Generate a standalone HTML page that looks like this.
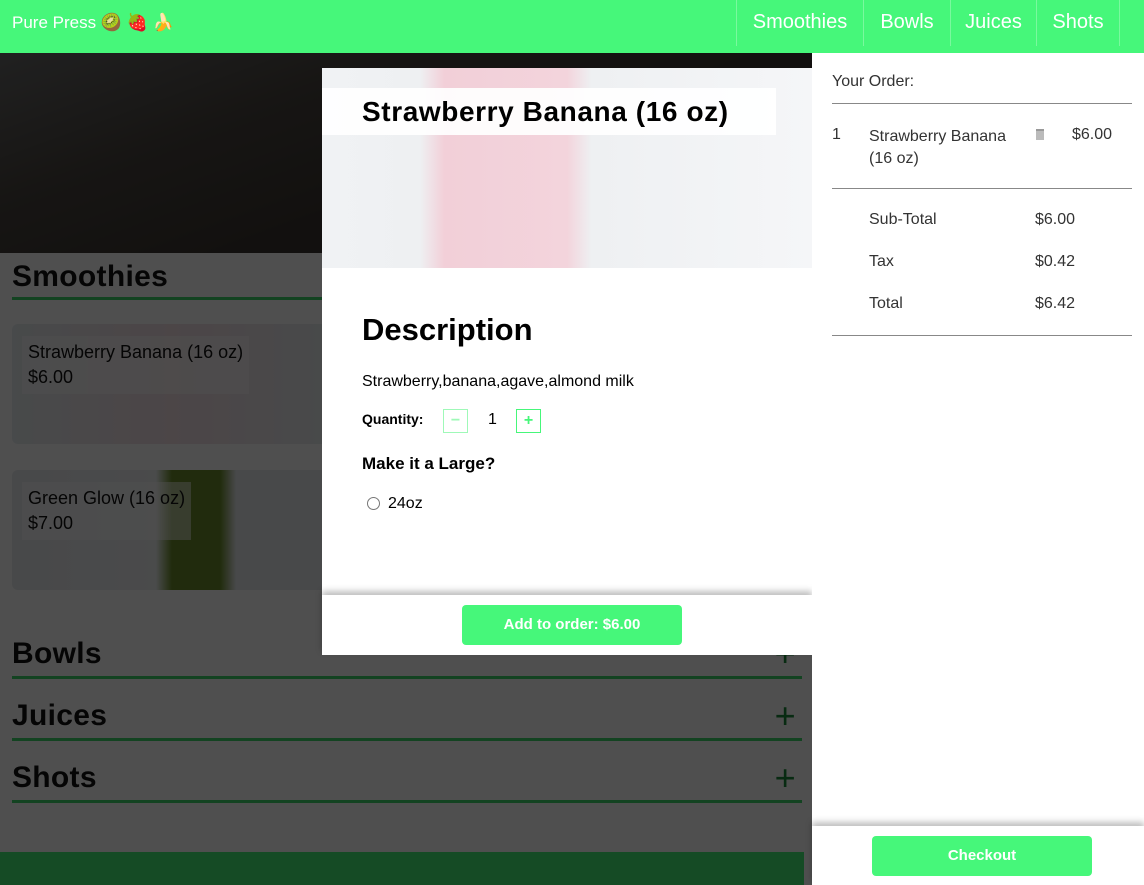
<!DOCTYPE html>
<html><head><meta charset="utf-8"><style>
*{box-sizing:border-box;margin:0;padding:0}
html,body{width:1144px;height:885px;overflow:hidden}
body{position:relative;font-family:"Liberation Sans",sans-serif;background:#fff}
.hdr{position:absolute;left:0;top:0;width:1144px;height:53px;background:#46f77a;color:#fff}
.brand{position:absolute;left:12px;top:13px;font-size:17px}
.nav{position:absolute;left:736px;top:0;height:46px;display:flex;border-left:1px solid #7af99e}
.nav div{height:46px;line-height:44px;font-size:20px;text-align:center;border-right:1px solid #7af99e}
.left{position:absolute;left:0;top:53px;width:812px;height:832px;background:#fff}
.hero{position:absolute;left:0;top:0;width:812px;height:200px;background:linear-gradient(160deg,#6a6a6a 0%,#4a4540 30%,#3a3430 60%,#4a4a4a 100%)}
.sec{position:absolute;left:12px;width:790px;border-bottom:3px solid #3ed86a;font-weight:bold;font-size:30px;color:#111;letter-spacing:.3px}
.card{position:absolute;left:12px;width:320px;height:120px;border-radius:6px;background:linear-gradient(90deg,#e8eef0,#f4e0e6 50%,#e8eef0)}
.card .lbl{position:absolute;left:10px;top:12px;background:rgba(255,255,255,.5);padding:4px 6px;font-size:18px;color:#111;line-height:25px}
.plus{position:absolute;right:6px;top:-4px;font-size:36px;color:#1c8a3a;font-weight:normal}
.foot{position:absolute;left:0;top:799px;width:804px;height:33px;background:#46f077}
.dim{position:absolute;left:0;top:53px;width:812px;height:832px;background:rgba(0,0,0,.69)}
.modal{position:absolute;left:322px;top:68px;width:490px;height:587px;background:#fff}
.mimg{position:absolute;left:0;top:0;width:490px;height:200px;background:linear-gradient(90deg,#f0f2f4 0%,#eef0f2 20%,#f2cfd8 25%,#f3d4dc 50%,#eef0f2 55%,#f5f6f8 100%)}
.mtitle{position:absolute;left:0;top:20px;width:454px;height:47px;background:rgba(255,255,255,.92);font-weight:bold;font-size:28px;padding:8px 0 0 40px;letter-spacing:.6px}
.mbot{position:absolute;left:0;top:527px;width:490px;height:60px;background:#fff;box-shadow:0 -4px 6px rgba(0,0,0,.25)}
.btn{position:absolute;background:#46f77a;color:#fff;border-radius:4px;font-weight:bold;text-align:center;font-size:15px}
.side{position:absolute;left:812px;top:53px;width:332px;height:832px;background:#fff}
.side .t{position:absolute;font-size:16px;color:#333}
.hr{position:absolute;left:20px;width:300px;border-top:1px solid #888}
.cbar{position:absolute;left:0;top:773px;width:332px;height:59px;background:#fff;box-shadow:0 -4px 6px rgba(0,0,0,.25)}
.qb{position:absolute;width:25px;height:24px;border:1px solid #46f77a;text-align:center;line-height:21px;color:#46f77a;font-weight:bold;font-size:16px}
</style></head><body>
<div class="hdr"><div class="brand">Pure Press 🥝 🍓 🍌</div>
<div class="nav"><div style="width:127px">Smoothies</div><div style="width:87px">Bowls</div><div style="width:86px">Juices</div><div style="width:83px">Shots</div></div></div>
<div class="left">
<div class="hero"></div>
<div class="sec" style="top:207px;height:40px;background:#fff">Smoothies</div>
<div class="card" style="top:271px"><div class="lbl">Strawberry Banana (16 oz)<br>$6.00</div></div>
<div class="card" style="top:417px;background:linear-gradient(90deg,#e8eaee,#eef0f2 45%,#6a8a2a 50%,#6a8a2a 65%,#e8eaee 70%)"><div class="lbl">Green Glow (16 oz)<br>$7.00</div></div>
<div class="sec" style="top:584px;height:42px">Bowls<span class="plus">+</span></div>
<div class="sec" style="top:646px;height:42px">Juices<span class="plus">+</span></div>
<div class="sec" style="top:708px;height:42px">Shots<span class="plus">+</span></div>
<div class="foot"></div>
</div>
<div class="dim"></div>
<div class="modal">
<div class="mimg"></div>
<div class="mtitle">Strawberry Banana (16 oz)</div>
<div style="position:absolute;left:40px;top:244px;font-size:31px;font-weight:bold">Description</div>
<div style="position:absolute;left:40px;top:305px;font-size:16px">Strawberry,banana,agave,almond milk</div>
<div style="position:absolute;left:40px;top:343px;font-size:14px;font-weight:bold">Quantity:</div>
<div class="qb" style="left:121px;top:341px;border-color:#9ff9b8;color:#9ff9b8">−</div>
<div style="position:absolute;left:166px;top:343px;font-size:16px">1</div>
<div class="qb" style="left:194px;top:341px">+</div>
<div style="position:absolute;left:40px;top:386px;font-size:17px;font-weight:bold">Make it a Large?</div>
<div style="position:absolute;left:45px;top:429px;width:13px;height:13px;border:1px solid #777;border-radius:50%"></div>
<div style="position:absolute;left:66px;top:427px;font-size:16px">24oz</div>
<div class="mbot"><div class="btn" style="left:140px;top:10px;width:220px;height:40px;line-height:40px">Add to order: $6.00</div></div>
</div>
<div class="side">
<div class="t" style="left:20px;top:20px">Your Order:</div>
<div class="hr" style="top:50px"></div>
<div class="t" style="left:20px;top:73px">1</div>
<div class="t" style="left:57px;top:73px;line-height:22px">Strawberry Banana<br>(16 oz)</div>
<div style="position:absolute;left:224px;top:76px;width:8px;height:11px;background:#bbb;border-top:2px solid #999"></div>
<div class="t" style="left:260px;top:73px">$6.00</div>
<div class="hr" style="top:135px"></div>
<div class="t" style="left:57px;top:158px">Sub-Total</div><div class="t" style="left:223px;top:158px">$6.00</div>
<div class="t" style="left:57px;top:200px">Tax</div><div class="t" style="left:223px;top:200px">$0.42</div>
<div class="t" style="left:57px;top:242px">Total</div><div class="t" style="left:223px;top:242px">$6.42</div>
<div class="hr" style="top:282px"></div>
<div class="cbar"><div class="btn" style="left:60px;top:10px;width:220px;height:40px;line-height:40px">Checkout</div></div>
</div>
</body></html>
